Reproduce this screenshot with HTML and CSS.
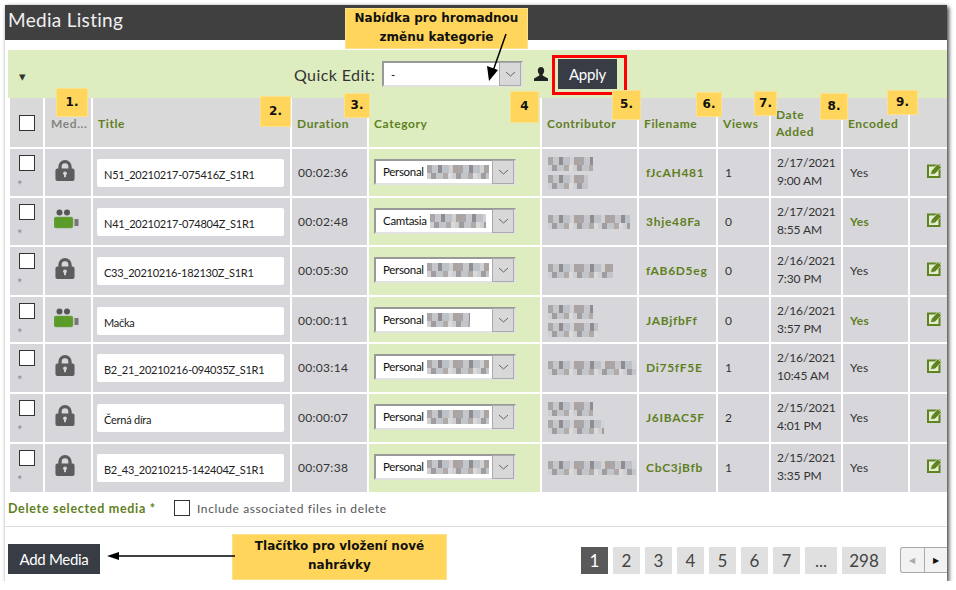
FILE: index.html
```html
<!DOCTYPE html>
<html lang="cs">
<head>
    <meta charset="UTF-8">
    <meta name="viewport" content="width=device-width, initial-scale=1.0">
    <title>Media Listing</title>
    <link rel="stylesheet" href="styles.css">
</head>
<body>
    <svg class="defs" width="0" height="0">
        <symbol id="lock" viewBox="0 0 20 22">
            <path d="M3 9V7a7 7 0 0 1 14 0v2h1a2 2 0 0 1 2 2v9a2 2 0 0 1-2 2H2a2 2 0 0 1-2-2v-9a2 2 0 0 1 2-2zm3.500 0h7V7a3.500 3.500 0 0 0-7 0z" fill="#5c5c5c" fill-rule="evenodd"/>
            <circle cx="10" cy="14" r="2" fill="#d6d6da"/>
            <rect x="9" y="14" width="2" height="4" fill="#d6d6da"/>
        </symbol>
        <symbol id="camera" viewBox="0 0 25 20">
            <circle cx="5.500" cy="3.500" r="3" fill="#555"/>
            <circle cx="13" cy="3.500" r="3" fill="#555"/>
            <rect x="0" y="8" width="19" height="11" rx="2" fill="#5c9a2a" stroke="#7aa85a" stroke-width="0.500"/>
            <rect x="20.500" y="10" width="4" height="7" fill="#777"/>
        </symbol>
        <symbol id="edit" viewBox="0 0 15 15">
            <rect x="1" y="2.500" width="11.500" height="11.500" fill="#e6eed6" stroke="#5f831f" stroke-width="2"/>
            <path d="M3.500 11.500l.8-3.500 6.200-7 4 3.200-6.500 6.800z" fill="#5f831f" stroke="#e6eed6" stroke-width="0.700"/>
        </symbol>
        <symbol id="chevron" viewBox="0 0 11 6">
            <path d="M1 1l4.500 4L10 1" fill="none" stroke="#666" stroke-width="1"/>
        </symbol>
    </svg>

    <div class="panel">
        <h1 class="panel-title">Media Listing</h1>

        <div class="toolbar">
            <span class="caret">&#9662;</span>
            <div class="quick-edit">
                <label class="quick-label">Quick Edit:</label>
                <div class="select select-quick">
                    <span class="select-text">-</span>
                    <span class="select-btn"><svg width="11" height="6"><use href="#chevron"/></svg></span>
                </div>
                <svg class="user-icon" width="14" height="14" viewBox="0 0 14 14"><path d="M7 0c2 0 3.200 1.500 3.200 3.600 0 1.500-.7 3-1.500 3.800-.3.400-.2 1 .4 1.300L14 11.500V14H0v-2.500l4.900-2.800c.6-.3.700-.9.400-1.300-.8-.8-1.500-2.300-1.500-3.800C3.800 1.500 5 0 7 0z" fill="#222"/></svg>
                <button class="btn apply-btn">Apply</button>
            </div>
        </div>

        <table class="media-table">
            <thead>
                <tr>
                    <th class="c-check"><input type="checkbox" class="check"></th>
                    <th class="c-type muted">Med...</th>
                    <th class="c-title">Title</th>
                    <th class="c-dur">Duration</th>
                    <th class="c-cat cat">Category</th>
                    <th class="c-contrib">Contributor</th>
                    <th class="c-file">Filename</th>
                    <th class="c-views">Views</th>
                    <th class="c-date">Date Added</th>
                    <th class="c-enc">Encoded</th>
                    <th class="c-edit"></th>
                </tr>
            </thead>
            <tbody>
                <tr>
                    <td class="tick"><input type="checkbox" class="check"><span class="star">*</span></td>
                    <td class="type"><svg class="lock-icon"><use href="#lock"/></svg></td>
                    <td class="name"><div class="title-input">N51_20210217-075416Z_S1R1</div></td>
                    <td class="dur">00:02:36</td>
                    <td class="cat"><div class="select"><span class="select-text">Personal</span><i class="mosaic w62"></i><span class="select-btn"><svg width="11" height="6"><use href="#chevron"/></svg></span></div></td>
                    <td class="person two"><i class="mosaic line w45"></i><i class="mosaic line w40"></i></td>
                    <td class="file">fJcAH481</td>
                    <td class="views">1</td>
                    <td class="date">2/17/2021<br>9:00 AM</td>
                    <td class="enc">Yes</td>
                    <td class="act"><svg class="edit-icon"><use href="#edit"/></svg></td>
                </tr>
                <tr>
                    <td class="tick"><input type="checkbox" class="check"><span class="star">*</span></td>
                    <td class="type"><svg class="camera-icon"><use href="#camera"/></svg></td>
                    <td class="name"><div class="title-input">N41_20210217-074804Z_S1R1</div></td>
                    <td class="dur">00:02:48</td>
                    <td class="cat"><div class="select"><span class="select-text">Camtasia</span><i class="mosaic w56"></i><span class="select-btn"><svg width="11" height="6"><use href="#chevron"/></svg></span></div></td>
                    <td class="person"><i class="mosaic line w82"></i></td>
                    <td class="file">3hje48Fa</td>
                    <td class="views">0</td>
                    <td class="date">2/17/2021<br>8:55 AM</td>
                    <td class="enc enc-on">Yes</td>
                    <td class="act"><svg class="edit-icon"><use href="#edit"/></svg></td>
                </tr>
                <tr>
                    <td class="tick"><input type="checkbox" class="check"><span class="star">*</span></td>
                    <td class="type"><svg class="lock-icon"><use href="#lock"/></svg></td>
                    <td class="name"><div class="title-input">C33_20210216-182130Z_S1R1</div></td>
                    <td class="dur">00:05:30</td>
                    <td class="cat"><div class="select"><span class="select-text">Personal</span><i class="mosaic w62"></i><span class="select-btn"><svg width="11" height="6"><use href="#chevron"/></svg></span></div></td>
                    <td class="person"><i class="mosaic line w65"></i></td>
                    <td class="file">fAB6D5eg</td>
                    <td class="views">0</td>
                    <td class="date">2/16/2021<br>7:30 PM</td>
                    <td class="enc">Yes</td>
                    <td class="act"><svg class="edit-icon"><use href="#edit"/></svg></td>
                </tr>
                <tr>
                    <td class="tick"><input type="checkbox" class="check"><span class="star">*</span></td>
                    <td class="type"><svg class="camera-icon"><use href="#camera"/></svg></td>
                    <td class="name"><div class="title-input">Mačka</div></td>
                    <td class="dur">00:00:11</td>
                    <td class="cat"><div class="select"><span class="select-text">Personal</span><i class="mosaic w43"></i><span class="select-btn"><svg width="11" height="6"><use href="#chevron"/></svg></span></div></td>
                    <td class="person two"><i class="mosaic line w45"></i><i class="mosaic line w50"></i></td>
                    <td class="file">JABjfbFf</td>
                    <td class="views">0</td>
                    <td class="date">2/16/2021<br>3:57 PM</td>
                    <td class="enc enc-on">Yes</td>
                    <td class="act"><svg class="edit-icon"><use href="#edit"/></svg></td>
                </tr>
                <tr>
                    <td class="tick"><input type="checkbox" class="check"><span class="star">*</span></td>
                    <td class="type"><svg class="lock-icon"><use href="#lock"/></svg></td>
                    <td class="name"><div class="title-input">B2_21_20210216-094035Z_S1R1</div></td>
                    <td class="dur">00:03:14</td>
                    <td class="cat"><div class="select"><span class="select-text">Personal</span><i class="mosaic w62"></i><span class="select-btn"><svg width="11" height="6"><use href="#chevron"/></svg></span></div></td>
                    <td class="person"><i class="mosaic line w88"></i></td>
                    <td class="file">Di75fF5E</td>
                    <td class="views">1</td>
                    <td class="date">2/16/2021<br>10:45 AM</td>
                    <td class="enc">Yes</td>
                    <td class="act"><svg class="edit-icon"><use href="#edit"/></svg></td>
                </tr>
                <tr>
                    <td class="tick"><input type="checkbox" class="check"><span class="star">*</span></td>
                    <td class="type"><svg class="lock-icon"><use href="#lock"/></svg></td>
                    <td class="name"><div class="title-input">Černá díra</div></td>
                    <td class="dur">00:00:07</td>
                    <td class="cat"><div class="select"><span class="select-text">Personal</span><i class="mosaic w62"></i><span class="select-btn"><svg width="11" height="6"><use href="#chevron"/></svg></span></div></td>
                    <td class="person two"><i class="mosaic line w45"></i><i class="mosaic line w56"></i></td>
                    <td class="file">J6IBAC5F</td>
                    <td class="views">2</td>
                    <td class="date">2/15/2021<br>4:01 PM</td>
                    <td class="enc">Yes</td>
                    <td class="act"><svg class="edit-icon"><use href="#edit"/></svg></td>
                </tr>
                <tr>
                    <td class="tick"><input type="checkbox" class="check"><span class="star">*</span></td>
                    <td class="type"><svg class="lock-icon"><use href="#lock"/></svg></td>
                    <td class="name"><div class="title-input">B2_43_20210215-142404Z_S1R1</div></td>
                    <td class="dur">00:07:38</td>
                    <td class="cat"><div class="select"><span class="select-text">Personal</span><i class="mosaic w62"></i><span class="select-btn"><svg width="11" height="6"><use href="#chevron"/></svg></span></div></td>
                    <td class="person"><i class="mosaic line w88"></i></td>
                    <td class="file">CbC3jBfb</td>
                    <td class="views">1</td>
                    <td class="date">2/15/2021<br>3:35 PM</td>
                    <td class="enc">Yes</td>
                    <td class="act"><svg class="edit-icon"><use href="#edit"/></svg></td>
                </tr>
            </tbody>
        </table>

        <div class="delete-row">
            <span class="delete-link">Delete selected media *</span>
            <input type="checkbox" class="check">
            <span class="delete-note">Include associated files in delete</span>
        </div>

        <div class="footer">
            <button class="btn add-btn">Add Media</button>
            <div class="pager">
                <a class="page current">1</a>
                <a class="page">2</a>
                <a class="page">3</a>
                <a class="page">4</a>
                <a class="page">5</a>
                <a class="page">6</a>
                <a class="page">7</a>
                <a class="page page-gap">...</a>
                <a class="page page-last">298</a>
                <div class="stepper">
                    <span class="step step-off">&#9664;</span>
                    <span class="step">&#9654;</span>
                </div>
            </div>
        </div>

        <!-- annotations drawn over the screenshot -->
        <div class="red-box"></div>
        <div class="note note-top">Nabídka pro hromadnou<br>změnu kategorie</div>
        <div class="note note-add">Tlačítko pro vložení nové<br>nahrávky</div>
        <div class="note n1">1.</div>
        <div class="note n2">2.</div>
        <div class="note n3">3.</div>
        <div class="note n4">4</div>
        <div class="note n5">5.</div>
        <div class="note n6">6.</div>
        <div class="note n7">7.</div>
        <div class="note n8">8.</div>
        <div class="note n9">9.</div>
        <svg class="arrow arrow-top" width="24" height="50" viewBox="0 0 24 50">
            <path d="M20 1L7 38" stroke="#000" stroke-width="1.500"/>
            <path d="M1 33l11 4-9 11z" fill="#000"/>
        </svg>
        <svg class="arrow arrow-add" width="128" height="10" viewBox="0 0 128 10">
            <path d="M10 5H128" stroke="#000" stroke-width="1.500"/>
            <path d="M0 5l12-4v8z" fill="#000"/>
        </svg>
    </div>
</body>
</html>
```

FILE: styles.css
```css
* {
    box-sizing: border-box;
}
body {
    margin: 0;
    background-color: #fff;
    font-family: Lato, "Open Sans", sans-serif;
    color: #333;
}
.defs {
    position: absolute;
}
.panel {
    position: relative;
    width: 942px;
    height: 576px;
    margin: 5px 0 0 5px;
    background-color: #fff;
    box-shadow: 2px 2px 4px rgba(0, 0, 0, 0.7), 0 0 3px rgba(0, 0, 0, 0.15);
    overflow: hidden;
}
.panel-title {
    height: 35px;
    margin: 0;
    padding: 0 3px;
    background-color: #404040;
    color: #f0f0f0;
    font-size: 19px;
    font-weight: 400;
    letter-spacing: 0.3px;
    line-height: 30px;
}

/* toolbar */
.toolbar {
    position: relative;
    height: 48px;
    margin: 10px 0 0 3px;
    background-color: #deedbf;
    display: flex;
    align-items: center;
}
.caret {
    width: 24px;
    padding: 4px 0 0 11px;
    font-size: 13px;
    color: #333;
}
.quick-edit {
    margin-left: 262px;
    display: flex;
    align-items: center;
}
.quick-label {
    width: 88px;
    font-size: 16px;
    letter-spacing: 0.4px;
}
.user-icon {
    margin: 0 10px 0 11px;
}
.select {
    width: 141px;
    height: 26px;
    display: flex;
    align-items: center;
    background-color: #fff;
    border: 2px solid #e2e2e2;
    border-top-color: #999;
    border-left-color: #999;
    font-size: 11.500px;
    letter-spacing: -0.3px;
    color: #111;
}
.select-text {
    flex: none;
    padding-left: 7px;
}
.select-btn {
    flex: none;
    width: 22px;
    height: 24px;
    margin-left: auto;
    display: flex;
    align-items: center;
    justify-content: center;
    background-color: #d8d8d8;
    border: 1px solid #aaa;
}
.btn {
    border: none;
    background-color: #373c45;
    color: #fff;
    font-family: Lato, sans-serif;
    font-size: 15px;
}
.apply-btn {
    width: 59px;
    height: 30px;
    padding: 0;
    letter-spacing: -0.2px;
}

/* table */
.media-table {
    width: 941px;
    margin: -2px 0 0 3px;
    border-collapse: separate;
    border-spacing: 2px;
    table-layout: fixed;
}
.media-table th,
.media-table td {
    padding: 15px 0 0 7px;
    background-color: #d7d7db;
    font-size: 12px;
    letter-spacing: 0.3px;
    line-height: 18px;
    vertical-align: top;
    text-align: left;
}
.media-table th {
    height: 49px;
    padding: 1px 0 0 5px;
    background-color: #d9d9d9;
    color: #5f7f1e;
    font-size: 12px;
    font-weight: 700;
    letter-spacing: 0.6px;
    line-height: 17px;
    vertical-align: middle;
}
.media-table tbody tr:nth-child(1) td { height: 47px; }
.media-table tbody tr:nth-child(2) td { height: 47px; }
.media-table tbody tr:nth-child(3) td { height: 48px; }
.media-table tbody tr:nth-child(4) td { height: 45px; }
.media-table tbody tr:nth-child(5) td { height: 48px; }
.media-table tbody tr:nth-child(6) td { height: 48px; }
.media-table tbody tr:nth-child(7) td { height: 48px; }
.c-check { width: 33px; }
.c-type { width: 46px; }
.c-title { width: 197px; }
.c-dur { width: 75px; }
.c-cat { width: 171px; }
.c-contrib { width: 95px; }
.c-file { width: 77px; }
.c-views { width: 51px; }
.c-date { width: 70px; }
.c-enc { width: 65px; }
.c-edit { width: 37px; }
.media-table th.muted {
    padding-left: 6px;
    color: #848484;
}
.media-table th.cat {
    background-color: #deedbf;
}
.media-table th.c-check {
    padding: 0 0 0 9px;
}
.check {
    appearance: none;
    display: block;
    width: 16px;
    height: 16px;
    margin: 0;
    background-color: #fff;
    border: 1px solid #333;
}
.media-table td.tick {
    padding: 6px 0 0 9px;
}
.star {
    display: block;
    height: 9px;
    margin: 7px 0 0 -2px;
    font-size: 13px;
    line-height: 14px;
    color: #8a8a92;
}
.media-table td.type {
    padding: 11px 0 0 0;
}
.lock-icon {
    display: block;
    width: 20px;
    height: 21px;
    margin-left: 10px;
}
.camera-icon {
    display: block;
    width: 25px;
    height: 20px;
    margin-left: 9px;
}
.media-table td.name {
    padding: 10px 0 0 4px;
}
.title-input {
    width: 187px;
    height: 28px;
    padding-left: 7px;
    background-color: #fff;
    border-radius: 2px;
    font-size: 11px;
    letter-spacing: -0.25px;
    line-height: 31px;
    color: #222;
}
.media-table td.dur {
    padding-left: 6px;
}
.media-table td.cat {
    padding: 10px 0 0 5px;
    background-color: #deedbf;
}
.cat .select {
    width: 142px;
}
.cat .select-text {
    padding-right: 3px;
}
.media-table td.person {
    padding: 17px 0 0 6px;
    overflow: hidden;
}
.media-table td.person.two {
    padding-top: 8px;
}
.mosaic {
    display: block;
    flex: none;
    height: 14px;
    filter: blur(0.6px);
    background-image:
        repeating-linear-gradient(90deg, #a9a5a8 0 5px, #c6c7cb 5px 11px, #8f8c92 11px 15px, #bcc2c8 15px 22px, #d2d2d4 22px 26px, #aaa39f 26px 31px),
        repeating-linear-gradient(90deg, #cfcfd2 0 4px, #9f9ca2 4px 9px, #c2c5c9 9px 16px, #b0aaa8 16px 21px, #dadadc 21px 25px);
    background-size: 100% 8px, 100% 6px;
    background-position: 0 0, 0 8px;
    background-repeat: no-repeat;
}
.line {
    margin-bottom: 4px;
}
.line:last-child {
    margin-bottom: 0;
}
.w40 { width: 40px; }
.w43 { width: 43px; }
.w45 { width: 45px; }
.w50 { width: 50px; }
.w56 { width: 56px; }
.w62 { width: 62px; }
.w65 { width: 65px; }
.w82 { width: 82px; }
.w88 { width: 88px; }
.media-table td.file {
    color: #5f7f1e;
    font-weight: 700;
    letter-spacing: 0.7px;
}
.media-table td.date {
    padding: 5px 0 0 6px;
    letter-spacing: -0.1px;
}
.media-table td.enc-on {
    color: #5f7f1e;
    font-weight: 700;
}
.media-table td.act {
    padding: 14px 0 0 17px;
}
.edit-icon {
    display: block;
    width: 15px;
    height: 15px;
}

/* bottom */
.delete-row {
    height: 35px;
    margin-top: -2px;
    padding: 0 0 2px 3px;
    display: flex;
    align-items: center;
    border-bottom: 1px solid #ddd;
    font-size: 12px;
    letter-spacing: 0.6px;
}
.delete-link {
    width: 166px;
    color: #5f7f1e;
    font-size: 12.500px;
    font-weight: 700;
    letter-spacing: 0.7px;
}
.delete-note {
    margin-left: 7px;
    color: #555;
}
.footer {
    height: 54px;
    padding: 17px 0 0 3px;
    display: flex;
}
.add-btn {
    width: 92px;
    height: 30px;
    padding: 0;
    letter-spacing: -0.3px;
}
.pager {
    margin-left: auto;
    padding-top: 3px;
    display: flex;
    gap: 5px;
}
.page {
    width: 27px;
    height: 27px;
    display: flex;
    align-items: center;
    justify-content: center;
    background-color: #e0e0e0;
    font-size: 17px;
    color: #444;
}
.page.current {
    background-color: #595959;
    color: #fff;
}
.page-gap {
    width: 32px;
}
.page-last {
    width: 44px;
}
.stepper {
    width: 47px;
    height: 26px;
    margin-left: 9px;
    display: flex;
    border: 1px solid #aaa;
    border-right: none;
    border-radius: 3px 0 0 3px;
    background-color: #f2f2f2;
}
.step {
    flex: 1;
    display: flex;
    align-items: center;
    justify-content: center;
    font-size: 8px;
    color: #111;
}
.step-off {
    border-right: 1px solid #aaa;
    color: #aaa;
}

/* annotations */
.red-box {
    position: absolute;
    left: 547px;
    top: 50px;
    width: 75px;
    height: 40px;
    border: 3px solid #f00;
}
.note {
    position: absolute;
    display: flex;
    align-items: center;
    justify-content: center;
    padding-bottom: 2px;
    background-color: #ffd65b;
    border: 1px solid #fbe08f;
    font-family: "DejaVu Sans", sans-serif;
    font-size: 12px;
    font-weight: 700;
    color: #111;
    text-align: center;
}
.note-top { left: 340px; top: 3px; width: 183px; height: 41px; line-height: 19px; }
.note-add { left: 227px; top: 529px; width: 215px; height: 46px; line-height: 19px; }
.n1 { left: 51px; top: 83px; width: 32px; height: 29px; }
.n2 { left: 255px; top: 91px; width: 31px; height: 31px; }
.n3 { left: 339px; top: 88px; width: 26px; height: 25px; }
.n4 { left: 505px; top: 86px; width: 29px; height: 32px; }
.n5 { left: 607px; top: 85px; width: 29px; height: 30px; }
.n6 { left: 691px; top: 87px; width: 26px; height: 25px; }
.n7 { left: 749px; top: 86px; width: 23px; height: 25px; }
.n8 { left: 815px; top: 88px; width: 28px; height: 27px; }
.n9 { left: 882px; top: 85px; width: 31px; height: 25px; }
.arrow {
    position: absolute;
}
.arrow-top { left: 481px; top: 28px; }
.arrow-add { left: 102px; top: 546px; }
```
